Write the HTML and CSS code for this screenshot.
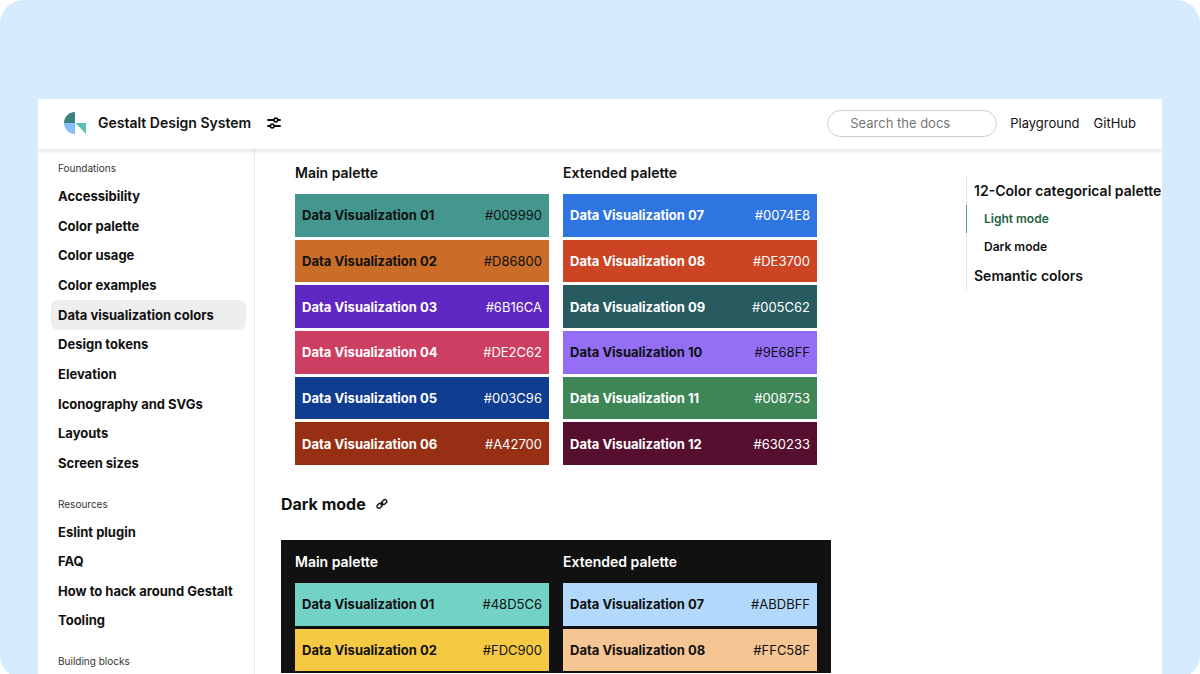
FILE: index.html
```html
<!DOCTYPE html>
<html lang="en">
<head>
<meta charset="utf-8">
<title>Gestalt Design System</title>
<link rel="stylesheet" href="styles.css">
</head>
<body>
<div class="page">
  <div class="card">
    <header class="header">
      <svg class="logo" viewBox="0 0 22 22" aria-hidden="true">
        <path d="M11 0v11H0A11 11 0 0 1 11 0z" fill="#3b847b"/>
        <path d="M0 11h11v11A11 11 0 0 1 0 11z" fill="#86bdfb"/>
        <path d="M11.500 11H22v11z" fill="#5bbfb0"/>
      </svg>
      <a class="brand" href="#">Gestalt Design System</a>
      <button class="icon-button" type="button" aria-label="Settings">
        <svg viewBox="0 0 14 14" width="14" height="14" fill="none" stroke="#111" stroke-width="1.900" stroke-linecap="round">
          <path d="M1 4h5.500M11 4h2M1 10h2M7.500 10H13"/>
          <circle cx="8.800" cy="4" r="1.900" stroke-width="1.600"/>
          <circle cx="5.200" cy="10" r="1.900" stroke-width="1.600"/>
        </svg>
      </button>
      <input class="search" type="search" placeholder="Search the docs" aria-label="Search the docs">
      <nav class="links">
        <a href="#">Playground</a>
        <a href="#">GitHub</a>
      </nav>
    </header>
    <div class="columns">
      <nav class="sidebar" aria-label="Documentation">
        <h2 class="group">Foundations</h2>
        <ul class="items items-foundations">
          <li><a href="#">Accessibility</a></li>
          <li><a href="#">Color palette</a></li>
          <li><a href="#">Color usage</a></li>
          <li><a href="#">Color examples</a></li>
          <li><a class="current" href="#">Data visualization colors</a></li>
          <li><a href="#">Design tokens</a></li>
          <li><a href="#">Elevation</a></li>
          <li><a href="#">Iconography and SVGs</a></li>
          <li><a href="#">Layouts</a></li>
          <li><a href="#">Screen sizes</a></li>
        </ul>
        <h2 class="group">Resources</h2>
        <ul class="items items-resources">
          <li><a href="#">Eslint plugin</a></li>
          <li><a href="#">FAQ</a></li>
          <li><a href="#">How to hack around Gestalt</a></li>
          <li><a href="#">Tooling</a></li>
        </ul>
        <h2 class="group">Building blocks</h2>
      </nav>
      <main class="main">
        <section class="panel">
          <div>
            <h3 class="palette-title">Main palette</h3>
            <ul class="swatches">
              <li class="swatch teal"><b>Data Visualization 01</b><span>#009990</span></li>
              <li class="swatch orange"><b>Data Visualization 02</b><span>#D86800</span></li>
              <li class="swatch purple invert"><b>Data Visualization 03</b><span>#6B16CA</span></li>
              <li class="swatch pink invert"><b>Data Visualization 04</b><span>#DE2C62</span></li>
              <li class="swatch navy invert"><b>Data Visualization 05</b><span>#003C96</span></li>
              <li class="swatch rust invert"><b>Data Visualization 06</b><span>#A42700</span></li>
            </ul>
          </div>
          <div>
            <h3 class="palette-title">Extended palette</h3>
            <ul class="swatches">
              <li class="swatch blue invert"><b>Data Visualization 07</b><span>#0074E8</span></li>
              <li class="swatch red invert"><b>Data Visualization 08</b><span>#DE3700</span></li>
              <li class="swatch pine invert"><b>Data Visualization 09</b><span>#005C62</span></li>
              <li class="swatch violet"><b>Data Visualization 10</b><span>#9E68FF</span></li>
              <li class="swatch green invert"><b>Data Visualization 11</b><span>#008753</span></li>
              <li class="swatch wine invert"><b>Data Visualization 12</b><span>#630233</span></li>
            </ul>
          </div>
        </section>
        <h2 class="section-title">Dark mode
          <a class="anchor" href="#" aria-label="Link to Dark mode">
            <svg viewBox="0 0 12 12" width="12" height="12" fill="none" stroke="#111" stroke-width="1.400">
              <rect x="0.800" y="5.800" width="5.600" height="3.800" rx="1.900" transform="rotate(-45 3.600 7.700)"/>
              <rect x="5.400" y="2.200" width="5.600" height="3.800" rx="1.900" transform="rotate(-45 8.200 4.100)"/>
              <path d="M4.500 7.300l2.800-2.800"/>
            </svg>
          </a>
        </h2>
        <section class="panel dark">
          <div>
            <h3 class="palette-title">Main palette</h3>
            <ul class="swatches short">
              <li class="swatch aqua"><b>Data Visualization 01</b><span>#48D5C6</span></li>
              <li class="swatch yellow"><b>Data Visualization 02</b><span>#FDC900</span></li>
            </ul>
          </div>
          <div>
            <h3 class="palette-title">Extended palette</h3>
            <ul class="swatches short">
              <li class="swatch sky"><b>Data Visualization 07</b><span>#ABDBFF</span></li>
              <li class="swatch peach"><b>Data Visualization 08</b><span>#FFC58F</span></li>
            </ul>
          </div>
        </section>
      </main>
      <aside class="aside">
        <nav class="toc" aria-label="On this page">
          <a href="#">12-Color categorical palette</a>
          <a class="sub active" href="#">Light mode</a>
          <a class="sub" href="#">Dark mode</a>
          <a href="#">Semantic colors</a>
        </nav>
      </aside>
    </div>
  </div>
</div>
</body>
</html>
```
FILE: styles.css
```css
* { box-sizing: border-box; }
body {
  margin: 0;
  background: #fff;
  color: #111;
  font: 13px/20px Inter, "Liberation Sans", sans-serif;
}
a { color: inherit; text-decoration: none; }
ul { list-style: none; margin: 0; padding: 0; }
h2, h3 { margin: 0; }
.page {
  display: flex;
  min-height: 100vh;
  padding: 99px 38px 1px;
  border-radius: 24px;
  background: #d7ebff;
}
.card {
  display: flex;
  flex: 1;
  flex-direction: column;
  min-width: 0;
  background: #fff;
}
.header {
  display: flex;
  align-items: center;
  height: 50px;
  padding: 0 26px 2px;
  background: #fff;
  box-shadow: 0 1px 6px rgba(0, 0, 0, 0.16);
  clip-path: inset(0 0 -10px 0);
  z-index: 1;
}
.logo { width: 22px; height: 22px; margin-right: 12px; }
.brand { font-size: 14px; font-weight: 600; }
.icon-button {
  display: flex;
  margin: 0 0 0 16px;
  padding: 0;
  border: 0;
  background: none;
}
.search {
  width: 170px;
  height: 27px;
  margin: 0 13px 0 auto;
  padding: 0 22px;
  border: 1px solid #cdcdcd;
  border-radius: 14px;
  background: #fff;
  color: #111;
  font: inherit;
}
.search::placeholder { color: #767676; opacity: 1; }
.links { display: flex; gap: 14px; }
.columns { display: flex; flex: 1; }
.sidebar {
  flex: 0 0 217px;
  padding: 11px 8px 4px 13px;
  border-right: 1px solid #eee;
}
.group {
  margin-bottom: 5px;
  padding-left: 7px;
  color: #333;
  font-size: 10px;
  font-weight: 400;
  line-height: 16px;
}
.items {
  display: grid;
  grid-auto-rows: 1fr;
  margin-bottom: 18px;
  font-weight: 700;
}
.items-foundations { min-height: 297px; }
.items-resources { min-height: 118px; }
.items a {
  display: flex;
  align-items: center;
  height: 100%;
  padding-left: 7px;
  border-radius: 7px;
  white-space: nowrap;
}
.items .current { background: #eee; }
.main {
  flex: 1;
  min-width: 0;
  padding: 2px 26px 0;
}
.panel {
  display: grid;
  grid-template-columns: 1fr 1fr;
  gap: 14px;
  max-width: 550px;
  padding: 12px 14px 14px;
}
.dark { padding-bottom: 2px; background: #111; }
.dark .palette-title { color: #fff; }
.palette-title {
  margin-bottom: 11px;
  font-size: 14px;
  font-weight: 600;
}
.swatches {
  display: grid;
  grid-auto-rows: 1fr;
  gap: 3px;
  min-height: 271px;
}
.short { min-height: 88px; }
.swatch {
  display: flex;
  align-items: center;
  justify-content: space-between;
  padding: 0 7px;
}
.swatch b { font-weight: 700; }
.invert { color: #fff; }
.teal { background: #44978f; }
.orange { background: #c96d28; }
.purple { background: #5f27c1; }
.pink { background: #cd3e63; }
.navy { background: #113d91; }
.rust { background: #972f15; }
.blue { background: #2f75e1; }
.red { background: #cc4423; }
.pine { background: #275b60; }
.violet { background: #946ff6; }
.green { background: #3e8656; }
.wine { background: #570f2f; }
.aqua { background: #73d2c6; }
.yellow { background: #f5c944; }
.sky { background: #b2d9fb; }
.peach { background: #f5c594; }
.section-title {
  display: flex;
  align-items: center;
  gap: 10px;
  margin: 13px 0 24px;
  font-size: 16px;
  font-weight: 700;
  line-height: 24px;
}
.anchor { display: flex; }
.aside { flex: 0 0 196px; padding-top: 27px; }
.toc {
  display: flex;
  flex-direction: column;
  font-size: 14px;
  font-weight: 600;
  line-height: 29px;
  white-space: nowrap;
}
.toc a { padding-left: 7px; border-left: 1px solid #e6e6e6; }
.toc .sub {
  padding-left: 17px;
  font-size: 12px;
  line-height: 28px;
}
.toc .active { border-color: #5f9c78; color: #22633f; }
```
